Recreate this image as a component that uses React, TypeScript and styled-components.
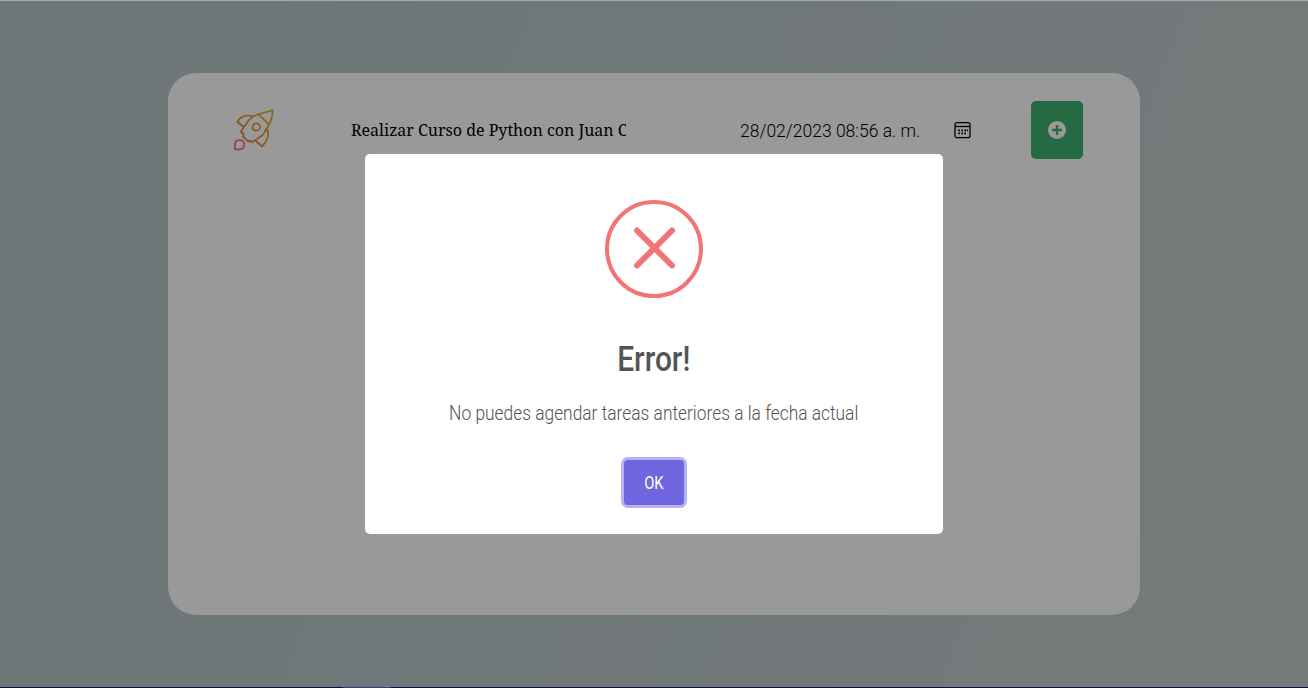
import React from "react";
import styled, { createGlobalStyle } from "styled-components";

const Global = createGlobalStyle`
  * { box-sizing: border-box; }
  body { margin: 0; overflow: hidden; font-family: Roboto, "Liberation Sans", sans-serif; }
`;

const Page = styled.main`
  position: relative;
  height: 687px;
  padding-top: 72px;
  border-top: 1px solid #9bb0b0;
  background: linear-gradient(110deg, #b8c5c8 0%, #bac6c9 45%, #c0cacb 75%, #c5cecb 100%);
`;

const WindowEdge = styled.footer`
  height: 1px;
  padding-left: 343px;
  background: #0c0c48;
`;

const ActiveMark = styled.div`
  width: 48px;
  height: 1px;
  background: #3a3590;
`;

const Card = styled.section`
  width: 972px;
  height: 542px;
  margin: 0 auto;
  padding: 28px 57px 0 65px;
  border-radius: 28px;
  background: #fff;
`;

const TaskForm = styled.div`
  display: flex;
  align-items: center;
  height: 58px;
`;

const Rocket = styled.svg`
  width: 42px;
  height: 42px;
  flex: none;
`;

const TaskName = styled.div`
  width: 275px;
  margin-left: 76px;
  overflow: hidden;
  white-space: nowrap;
  color: #000;
  font: 16px/24px "Noto Serif", "Droid Serif", "DejaVu Serif Condensed", "DejaVu Serif", serif;
`;

const DateField = styled.div`
  display: flex;
  align-items: center;
  justify-content: space-between;
  width: 231px;
  margin-left: 114px;
  color: #000;
  font-size: 18px;
  font-weight: 300;
`;

const AddButton = styled.button`
  display: grid;
  place-items: center;
  width: 52px;
  height: 58px;
  margin-left: auto;
  padding: 0;
  border: 0;
  border-radius: 5px;
  background: #3cb371;
`;

const Scaled = styled.span<{ $x: number; $from?: string }>`
  display: inline-block;
  white-space: nowrap;
  transform: scaleX(${(p) => p.$x});
  transform-origin: ${(p) => p.$from ?? "center"};
`;

const Overlay = styled.div`
  position: absolute;
  inset: 0;
  display: flex;
  align-items: center;
  justify-content: center;
  background: rgba(0, 0, 0, 0.4);
`;

const Dialog = styled.div`
  display: flex;
  flex-direction: column;
  align-items: center;
  width: 578px;
  height: 380px;
  padding-top: 46px;
  border-radius: 5px;
  background: #fff;
  color: #545454;
`;

const ErrorIcon = styled.svg`
  width: 98px;
  height: 98px;
  flex: none;
`;

const Title = styled.h2`
  margin: 40px 0 0;
  font-size: 35px;
  line-height: 44px;
  font-weight: 500;
`;

const Message = styled.p`
  margin: 18px 0 0;
  font-size: 20px;
  line-height: 26px;
  font-weight: 300;
`;

const OkButton = styled.button`
  width: 60px;
  height: 45px;
  margin-top: 34px;
  padding: 0;
  border: 0;
  border-radius: 4px;
  background: #7066e0;
  box-shadow: 0 0 0 3px #b8b2f0;
  color: #fff;
  font: 400 18px Roboto, sans-serif;
`;

export default function App() {
  return (
    <>
      <Global />
      <Page>
        <Card>
          <TaskForm>
            <Rocket viewBox="0 0 42 42" fill="none" stroke="url(#flame)" strokeWidth="1.7" strokeLinejoin="round" strokeLinecap="round">
              <defs>
                <linearGradient id="flame" gradientUnits="userSpaceOnUse" x1="2" y1="40" x2="40" y2="2">
                  <stop stopColor="#ef6b70" />
                  <stop offset=".35" stopColor="#e9853c" />
                  <stop offset="1" stopColor="#e8ad1c" />
                </linearGradient>
              </defs>
              <path d="M7.700 22.700 16 11Q19 7 25.500 5.200L39.700 1.300Q39.500 9 36 15.500L30 25.700 19 33.300 17.500 31.500 15.500 32.500 10 27.700 10.500 25ZM25.500 5.200 36 15.500M19 7.300C13 5 6 8 4.500 13.300L10.500 17.500M34.300 20C36.500 26 34 33 29 37.300L23.300 32.500M2 40.300V35.500Q2 31 6.500 31T11.200 35.500Q11 40.300 6.500 40.300Z" />
              <circle cx="23.300" cy="18" r="3.700" />
            </Rocket>
            <TaskName>Realizar Curso de Python con Juan Carlos</TaskName>
            <DateField>
              <Scaled $x={0.973} $from="left">28/02/2023 08:56 a. m.</Scaled>
              <svg width="17" height="17" viewBox="0 0 17 17" fill="none" stroke="#000" strokeWidth="1.3">
                <rect x="1" y=".7" width="15" height="15" rx="2" />
                <path d="M1 4.500h15" />
                <path d="M7.300 8.300h1.700m1.300 0h1.700m.8 0h1.200M4.200 8.300h1.700M4.200 11.300h1.700m1.400 0h1.700m1.300 0h1.700" strokeWidth="1.700" />
              </svg>
            </DateField>
            <AddButton aria-label="Agregar">
              <svg width="18" height="18" viewBox="0 0 18 18">
                <circle cx="9" cy="9" r="9" fill="#fff" />
                <path d="M9 4v10M4 9h10" stroke="#3cb371" strokeWidth="2.400" />
              </svg>
            </AddButton>
          </TaskForm>
        </Card>
        <Overlay>
          <Dialog role="dialog">
            <ErrorIcon viewBox="0 0 98 98" fill="none" stroke="#f27474">
              <circle cx="49" cy="49" r="47" strokeWidth="4" />
              <path d="M32 30.500 67 65.500M67 30.500 32 65.500" strokeWidth="6" strokeLinecap="round" />
            </ErrorIcon>
            <Title><Scaled $x={0.855}>Error!</Scaled></Title>
            <Message><Scaled $x={0.868}>No puedes agendar tareas anteriores a la fecha actual</Scaled></Message>
            <OkButton><Scaled $x={0.82}>OK</Scaled></OkButton>
          </Dialog>
        </Overlay>
      </Page>
      <WindowEdge><ActiveMark /></WindowEdge>
    </>
  );
}
